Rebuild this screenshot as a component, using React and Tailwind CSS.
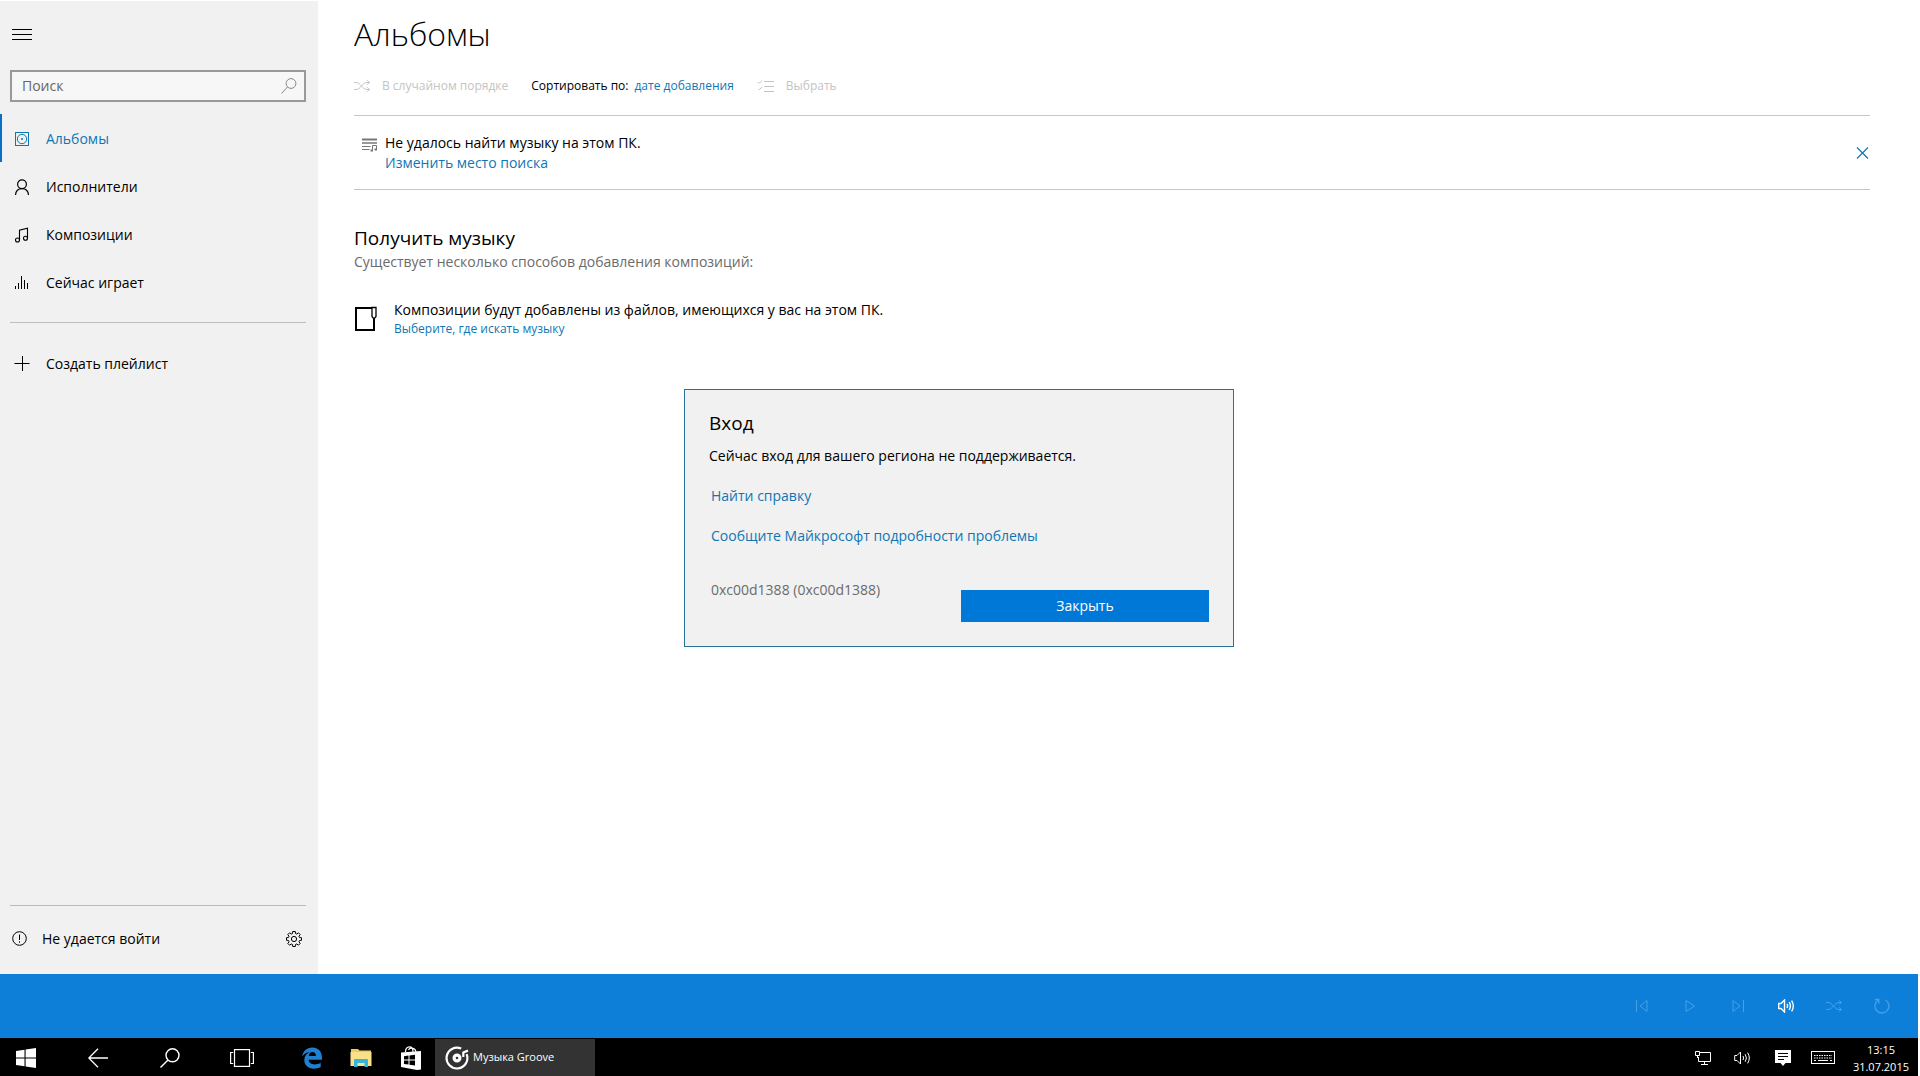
import React from "react";

function Icon({ w, h, children, className = "", sw = 1 }) {
  return (
    <svg
      width={w}
      height={h}
      viewBox={`0 0 ${w} ${h}`}
      fill="none"
      stroke="currentColor"
      strokeWidth={sw}
      className={`block shrink-0 ${className}`}
      aria-hidden="true"
    >
      {children}
    </svg>
  );
}

const AlbumIcon = () => (
  <Icon w={16} h={16}>
    <rect x="1.5" y="1.5" width="13" height="13" />
    <circle cx="8" cy="8" r="4.7" />
    <circle cx="8" cy="8" r="1" fill="currentColor" stroke="none" />
  </Icon>
);
const ArtistIcon = () => (
  <Icon w={16} h={16} sw={1.2}>
    <circle cx="8" cy="5.2" r="4.4" />
    <path d="M1.5 16 C1.8 12.3 4.3 9.7 8 9.7 S14.2 12.3 14.5 16" />
  </Icon>
);
const SongIcon = () => (
  <Icon w={16} h={16} sw={1.1}>
    <path d="M5.5 13 V3.2 L13.5 1.2 V11" />
    <circle cx="3.5" cy="13" r="2" />
    <circle cx="11.5" cy="11.3" r="2" />
  </Icon>
);
const PlayingIcon = () => (
  <Icon w={16} h={16}>
    <path d="M1.5 14 V11 M4.5 14 V8 M7.5 14 V1 M10.5 14 V5 M13.5 14 V8" />
  </Icon>
);
const PlusIcon = () => (
  <Icon w={16} h={16}>
    <path d="M0.5 7.5 H15.5 M8.5 0 V15" />
  </Icon>
);

const NAV = [
  { label: "Альбомы", icon: AlbumIcon, active: true },
  { label: "Исполнители", icon: ArtistIcon },
  { label: "Композиции", icon: SongIcon },
  { label: "Сейчас играет", icon: PlayingIcon },
];

function ShuffleIcon() {
  return (
    <Icon w={16} h={12}>
      <path d="M0 2.5 H2 C7 2.5 8 9.5 13 9.5 H15.5 M0 9.5 H2 C7 9.5 8 2.5 13 2.5 H15.5 M13 0.2 L15.3 2.5 L13 4.8 M13 7.2 L15.3 9.5 L13 11.8" />
    </Icon>
  );
}

function gearPath() {
  const pts = [];
  const teeth = 8;
  for (let i = 0; i < teeth; i++) {
    const a = (i / teeth) * Math.PI * 2;
    [[-0.27, 5.7], [-0.17, 7.6], [0.17, 7.6], [0.27, 5.7]].forEach(([d, r]) => {
      pts.push(`${(8 + r * Math.cos(a + d)).toFixed(2)} ${(8 + r * Math.sin(a + d)).toFixed(2)}`);
    });
  }
  return `M${pts.join(" L")} Z`;
}

function Sidebar() {
  return (
    <aside className="flex w-[318px] shrink-0 flex-col bg-[#f1f1f1]">
      <button type="button" aria-label="Меню" className="mt-6 ml-3 flex h-5 w-5 items-center">
        <Icon w={20} h={12}>
          <path d="M0 0.5 H20 M0 5.5 H20 M0 10.5 H20" />
        </Icon>
      </button>
      <div className="mt-[25px] mr-3 ml-[10px] flex h-8 items-center border-2 border-[#999] bg-[#f7f7f7] pr-[7px] pl-[10px]">
        <input
          type="text"
          aria-label="Поиск"
          placeholder="Поиск"
          className="min-w-0 flex-1 bg-transparent text-sm outline-none placeholder:text-[#666]"
        />
        <Icon w={16} h={16} className="text-[#888]">
          <circle cx="10" cy="5.5" r="4.9" />
          <path d="M6.5 9 L0.5 15.5" />
        </Icon>
      </div>
      <nav className="mt-3 flex flex-col">
        {NAV.map(({ label, icon: I, active }) => (
          <button
            key={label}
            type="button"
            className={`flex h-12 items-center gap-4 border-l-2 pt-px pl-3 text-left text-sm ${
              active ? "border-[#0a6fc7] text-[#0f76b4]" : "border-transparent text-black"
            }`}
          >
            <I />
            {label}
          </button>
        ))}
      </nav>
      <hr className="mt-4 mr-3 ml-[10px] border-[#bfbfbf]" />
      <button type="button" className="mt-[17px] flex h-12 items-center gap-4 pl-[14px] text-left text-sm">
        <PlusIcon />
        Создать плейлист
      </button>
      <div className="mt-auto mr-3 ml-[10px] flex h-[69px] items-center border-t border-[#b9bcb8] pr-1 pb-[3px] pl-[2px]">
        <button type="button" className="flex flex-1 items-center gap-[14px] text-left text-sm">
          <Icon w={16} h={16}>
            <circle cx="7.5" cy="7.5" r="6.8" />
            <path d="M7.5 3.5 V9 M7.5 10.3 V11.7" />
          </Icon>
          Не удается войти
        </button>
        <button type="button" aria-label="Параметры">
          <Icon w={16} h={16}>
            <path d={gearPath()} strokeLinejoin="round" />
            <circle cx="8" cy="8" r="2.6" />
          </Icon>
        </button>
      </div>
    </aside>
  );
}

function SignInDialog() {
  return (
    <div
      role="dialog"
      aria-labelledby="signin-title"
      className="absolute top-[388px] left-1/2 w-[550px] -translate-x-1/2 border border-[#2a7198] bg-[#f1f1f1] px-6 pt-[19px] pb-6"
    >
      <h2 id="signin-title" className="text-[19px] leading-7">
        Вход
      </h2>
      <p className="mt-[9px] text-sm leading-5">Сейчас вход для вашего региона не поддерживается.</p>
      <div className="mt-5 flex flex-col items-start gap-5 pl-[2px] text-sm leading-5 text-[#0f76b4]">
        <a href="#help">Найти справку</a>
        <a href="#report">Сообщите Майкрософт подробности проблемы</a>
      </div>
      <div className="mt-[34px] flex items-start justify-between pl-[2px]">
        <p className="text-sm leading-5 text-[#6b6b6b]">0xc00d1388 (0xc00d1388)</p>
        <button type="button" className="mt-[10px] h-8 w-[248px] bg-[#0078d7] text-sm text-white">
          Закрыть
        </button>
      </div>
    </div>
  );
}

function Content() {
  return (
    <main className="min-w-0 flex-1 pr-12 pl-9">
      <h1 className="pt-[11px] text-[32px] leading-[44px] font-light">Альбомы</h1>
      <div className="mt-5 flex h-5 items-center text-xs">
        <button type="button" disabled className="flex items-center gap-3 text-[#c4c4c4]">
          <ShuffleIcon />
          В случайном порядке
        </button>
        <button type="button" className="ml-[23px] flex gap-[6px]">
          <span>Сортировать по:</span>
          <span className="text-[#0f76b4]">дате добавления</span>
        </button>
        <button type="button" disabled className="ml-6 flex items-center gap-3 text-[#c4c4c4]">
          <Icon w={16} h={12}>
            <path d="M6 1.5 H16 M6 6.5 H16 M6 11.5 H16 M0 2 L1.3 3.3 L4 0.5 M0 8.5 L1.3 9.8 L4 7" />
          </Icon>
          Выбрать
        </button>
      </div>
      <section className="mt-[19px] flex h-[75px] items-center border-y border-[#c6c6c6] pl-2">
        <Icon w={16} h={14} className="mr-[7px] mb-4 text-[#777]">
          <path d="M0 1.5 H15" strokeWidth="2" />
          <path d="M0 5 H15" strokeWidth="1.5" />
          <path d="M0 8.5 H8.5 M0 11.5 H7.5" />
          <path d="M10.5 12.5 V7.5 H14.5 V11.5" />
          <path d="M8.5 12.5 H11 M12.5 11.5 H15" strokeWidth="2" />
        </Icon>
        <div className="flex flex-1 flex-col items-start text-sm leading-5">
          <p>Не удалось найти музыку на этом ПК.</p>
          <a href="#location" className="text-[#0f76b4]">
            Изменить место поиска
          </a>
        </div>
        <button type="button" aria-label="Скрыть" className="mr-px text-[#0f76b4]">
          <Icon w={13} h={12} sw={1.2}>
            <path d="M1 0.5 L12 11.5 M12 0.5 L1 11.5" />
          </Icon>
        </button>
      </section>
      <h2 className="mt-[34px] text-[19px] leading-7">Получить музыку</h2>
      <p className="text-sm leading-5 text-[#6b6b6b]">Существует несколько способов добавления композиций:</p>
      <div className="mt-7 flex items-center gap-4">
        <Icon w={24} h={26} sw={2}>
          <path d="M18 2 H2 V24 H20 V13" />
          <path d="M18 1.5 H22 V10.5 L20 13 L18 10.5 Z" strokeWidth="1.3" />
        </Icon>
        <div className="flex flex-col items-start">
          <p className="text-sm leading-5">Композиции будут добавлены из файлов, имеющихся у вас на этом ПК.</p>
          <a href="#choose" className="text-xs leading-[18px] text-[#0f76b4]">
            Выберите, где искать музыку
          </a>
        </div>
      </div>
    </main>
  );
}

function VolumeIcon({ sw }) {
  return (
    <Icon w={17} h={14} sw={sw}>
      <path d="M0.7 4.5 H3 L6.5 1 V13 L3 9.5 H0.7 Z" />
      <path d="M9 5 Q10.2 7 9 9 M11.2 3.2 Q13.6 7 11.2 10.8 M13.6 1.6 Q17 7 13.6 12.4" />
    </Icon>
  );
}

const PLAYER = [
  { label: "Назад", icon: <Icon w={16} h={14}><path d="M2.5 1 V13 M13 1.5 V12.5 L6 7 Z" /></Icon> },
  { label: "Воспроизвести", icon: <Icon w={16} h={14}><path d="M4 1.5 V12.5 L12.5 7 Z" /></Icon> },
  { label: "Далее", icon: <Icon w={16} h={14}><path d="M13.5 1 V13 M3 1.5 V12.5 L10 7 Z" /></Icon> },
  { label: "Громкость", icon: <VolumeIcon sw={1.4} />, on: true },
  { label: "Случайный порядок", icon: <ShuffleIcon /> },
  {
    label: "Повтор",
    icon: (
      <Icon w={16} h={16} sw={1.3}>
        <path d="M11.5 2 A7 7 0 1 1 4 2.2 M0.8 1.5 H4.8 V5.5" />
      </Icon>
    ),
  },
];

function Player() {
  return (
    <footer className="flex h-16 items-center justify-end bg-[#0e7fd9] pr-3">
      {PLAYER.map(({ label, icon, on }) => (
        <button
          key={label}
          type="button"
          aria-label={label}
          disabled={!on}
          className={`flex h-12 w-12 items-center justify-center ${on ? "text-white" : "text-[#45a0e6]"}`}
        >
          {icon}
        </button>
      ))}
    </footer>
  );
}

function TaskButton({ label, className, children }) {
  return (
    <button type="button" aria-label={label} className={`flex h-full items-center justify-center ${className}`}>
      {children}
    </button>
  );
}

function Taskbar() {
  return (
    <div className="flex h-[38px] items-center bg-black pt-px text-white">
      <TaskButton label="Пуск" className="w-[52px]">
        <Icon w={20} h={20}>
          <path d="M0 3 L8.5 1.8 V9.4 H0 Z M9.6 1.6 L20 0 V9.4 H9.6 Z M0 10.5 H8.5 V18.2 L0 17 Z M9.6 10.5 H20 V20 L9.6 18.4 Z" fill="currentColor" stroke="none" />
        </Icon>
      </TaskButton>
      <TaskButton label="Назад" className="w-[92px]">
        <Icon w={20} h={20} sw={1.3}>
          <path d="M20 10 H1 M10 0.8 L0.8 10 L10 19.2" />
        </Icon>
      </TaskButton>
      <TaskButton label="Поиск в Windows" className="w-[52px]">
        <Icon w={20} h={20} sw={1.4}>
          <circle cx="12.5" cy="7.3" r="6.5" />
          <path d="M8 12 L0.5 19.5" />
        </Icon>
      </TaskButton>
      <TaskButton label="Представление задач" className="w-[92px]">
        <Icon w={24} h={18} sw={1.2}>
          <rect x="4.5" y="0.6" width="15" height="16.8" />
          <path d="M3.2 3.5 H0.6 V14.5 H3.2 M20.8 3.5 H23.4 V14.5 H20.8" />
        </Icon>
      </TaskButton>
      <TaskButton label="Microsoft Edge" className="w-12">
        <Icon w={20} h={22}>
          <path
            d="M0 9.6 C1 4 4.8 0.4 10.2 0.4 C16.4 0.4 20 4.6 20 10.4 V12.8 H6.6 C6.9 16 9.4 17.4 12.5 17.4 C14.9 17.4 17 16.7 18.7 15.7 V20 C16.8 21.1 14.5 21.7 11.8 21.7 C6.2 21.7 2.3 18.4 2.3 13 C2.3 9.3 4.4 6.4 7.6 4.9 C4.3 5.2 1.6 7.2 0 9.6 Z M6.8 9 H13.9 C13.9 6.5 12.7 5 10.5 5 C8.5 5 7.2 6.6 6.8 9 Z"
            fill="#1f7fd0"
            fillRule="evenodd"
            stroke="none"
          />
        </Icon>
      </TaskButton>
      <TaskButton label="Проводник" className="w-[50px]">
        <Icon w={22} h={20}>
          <g stroke="none">
            <path d="M1 1 H8 L9.5 2.5 H21 V18 H1 Z" fill="#ecc866" />
            <path d="M0.5 4 H21.5 V18 H0.5 Z" fill="#fbe08a" />
            <path d="M4 19 V12 Q4 11 5 11 H17 Q18 11 18 12 V19 H14.5 V15 H7.5 V19 Z" fill="#35b5dc" />
          </g>
        </Icon>
      </TaskButton>
      <TaskButton label="Магазин" className="w-[49px]">
        <Icon w={22} h={24}>
          <path d="M5.5 6 C5.5 2.5 7 0.8 9.5 0.8 C11.5 0.8 13 2.5 13 6 M8.5 4 C9.5 1.5 15 1 16 6" strokeWidth="1.2" />
          <path d="M1 6.5 L21 5 V23.5 L17 24 L1 21 Z" fill="currentColor" stroke="none" />
          <path d="M4 10.2 L8.5 9.6 V13.5 H4 Z M9.5 9.5 L15 8.8 V13.5 H9.5 Z M4 14.5 H8.5 V18.6 L4 18 Z M9.5 14.5 H15 V19.4 L9.5 18.7 Z" fill="#000" stroke="none" />
        </Icon>
      </TaskButton>
      <button type="button" className="flex h-full w-40 items-center gap-1 bg-[#333] pl-[10px] text-[11px]">
        <Icon w={24} h={24} sw={2.2}>
          <path d="M16.2 2.6 A10.4 10.4 0 1 0 21.6 8.2" />
          <circle cx="12" cy="12" r="2.9" strokeWidth="3.2" />
          <path d="M18.3 11 V6.4 L23 4.6" strokeWidth="2.2" />
        </Icon>
        Музыка Groove
      </button>
      <div className="ml-auto flex h-full items-center">
        <TaskButton label="Сеть" className="w-10">
          <Icon w={16} h={14}>
            <path d="M5 1.5 H15.5 V10.5 H3.5 V6 M9.5 10.5 V13 M6 13.5 H13" />
            <path d="M0.5 0.5 H4.5 V4.5 H0.5 Z M2.5 4.5 V7" />
          </Icon>
        </TaskButton>
        <TaskButton label="Громкость системы" className="w-10">
          <VolumeIcon sw={1} />
        </TaskButton>
        <TaskButton label="Уведомления" className="w-10">
          <Icon w={16} h={16}>
            <path d="M0 0 H16 V13 H10.5 L8 16 L5.5 13 H0 Z" fill="currentColor" stroke="none" />
            <path d="M3 3.5 H13 M3 6.5 H13 M3 9.5 H9" stroke="#000" />
          </Icon>
        </TaskButton>
        <TaskButton label="Сенсорная клавиатура" className="w-10">
          <Icon w={24} h={14}>
            <rect x="0.5" y="0.5" width="23" height="12" />
            <path d="M3 4.5 H21 M3 7 H21" strokeDasharray="1.5 1" />
            <path d="M3 9.5 H5 M7 9.5 H17 M19 9.5 H21" />
          </Icon>
        </TaskButton>
        <button type="button" className="mr-[9px] ml-[10px] text-center text-[11px] leading-[17px]">
          <time className="block">13:15</time>
          <time className="block">31.07.2015</time>
        </button>
      </div>
    </div>
  );
}

export default function App() {
  return (
    <div className="flex min-h-screen flex-col bg-white pt-px font-['Open_Sans','Noto_Sans',sans-serif] text-black">
      <div className="relative mr-[2px] flex flex-1 flex-col">
        <div className="flex flex-1">
          <Sidebar />
          <Content />
        </div>
        <Player />
        <SignInDialog />
      </div>
      <div className="mr-[2px]">
        <Taskbar />
      </div>
    </div>
  );
}
